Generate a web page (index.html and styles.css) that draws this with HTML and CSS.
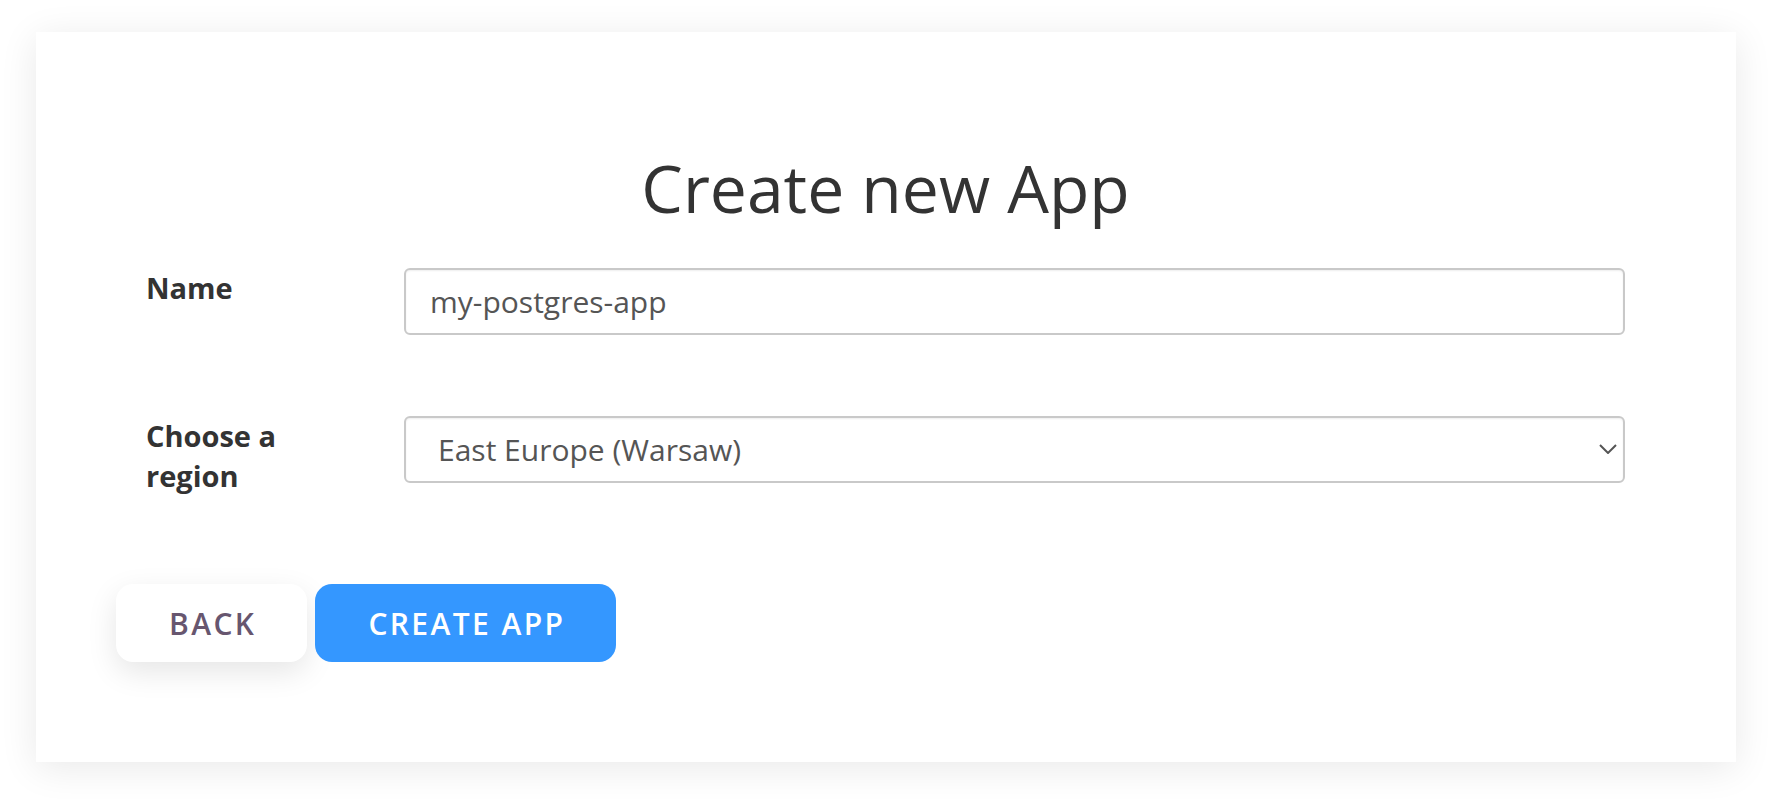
FILE: index.html
```html
<!DOCTYPE html>
<html>
<head>
<title>Create new App</title>
<link rel="stylesheet" href="styles.css">
</head>
<body>
<div class="card">
  <h1 class="title">Create new App</h1>
  <form class="app-form" name="createAppForm">
    <div class="field">
      <label for="name">Name</label>
      <input type="text" id="name" name="name" value="my-postgres-app">
    </div>

    <div class="field field-region">
      <label for="region">Choose a region</label>
      <div class="select-wrap">
        <select id="region" name="region">
          <option>East Europe (Warsaw)</option>
        </select>
        <svg class="chevron" width="18" height="10" viewBox="0 0 18 10">
          <path d="M1 1 L9 9 L17 1" fill="none" stroke="#555" stroke-width="2"/>
        </svg>
      </div>
    </div>

    <div class="actions">
      <button type="button" class="btn btn-back">BACK</button>
      <button type="submit" class="btn btn-create">CREATE APP</button>
    </div>
  </form>
</div>
</body>
</html>
```

FILE: styles.css
```css
body {
  margin: 0;
  font-family: "Open Sans", "Liberation Sans", sans-serif;
  background-color: #fff;
  color: #333;
}

.card {
  margin: 32px 42px 37px 36px;
  padding: 110px 111px 100px 110px;
  background-color: #fff;
  box-shadow: 0 6px 36px rgba(0, 0, 0, 0.09);
}

.title {
  margin: 0 0 36px;
  font-size: 66px;
  font-weight: 400;
  line-height: normal;
  text-align: center;
  color: #333;
}

.field {
  display: grid;
  grid-template-columns: 258px 1fr;
  align-items: start;
  margin-bottom: 81px;
}

.field-region {
  margin-bottom: 88px;
}

label {
  display: block;
  max-width: 150px;
  font-size: 29px;
  font-weight: 700;
  line-height: 40px;
  color: #333;
}

input[type="text"],
select {
  width: 100%;
  height: 67px;
  box-sizing: border-box;
  margin: 0;
  padding: 0 24px;
  border: 2px solid #c9c9c9;
  border-radius: 6px;
  background-color: #fff;
  font-family: inherit;
  font-size: 30px;
  color: #555;
  box-shadow: inset 0 1px 2px rgba(0, 0, 0, 0.07);
  outline: none;
}

.select-wrap {
  position: relative;
}

select {
  appearance: none;
  -webkit-appearance: none;
  padding-left: 32px;
}

.chevron {
  position: absolute;
  right: 8px;
  top: 28px;
  pointer-events: none;
}

.actions {
  display: flex;
  gap: 8px;
  margin-left: -30px;
}

.btn {
  height: 78px;
  padding: 0 51px 0 53px;
  border: none;
  border-radius: 17px;
  font-family: inherit;
  font-size: 30px;
  font-weight: 600;
  letter-spacing: 2.4px;
  cursor: pointer;
}

.btn-back {
  background-color: #fff;
  color: #67566f;
  box-shadow: 0 10px 30px rgba(0, 0, 0, 0.1);
}

.btn-create {
  background-color: #3497ff;
  color: #fff;
}
```
